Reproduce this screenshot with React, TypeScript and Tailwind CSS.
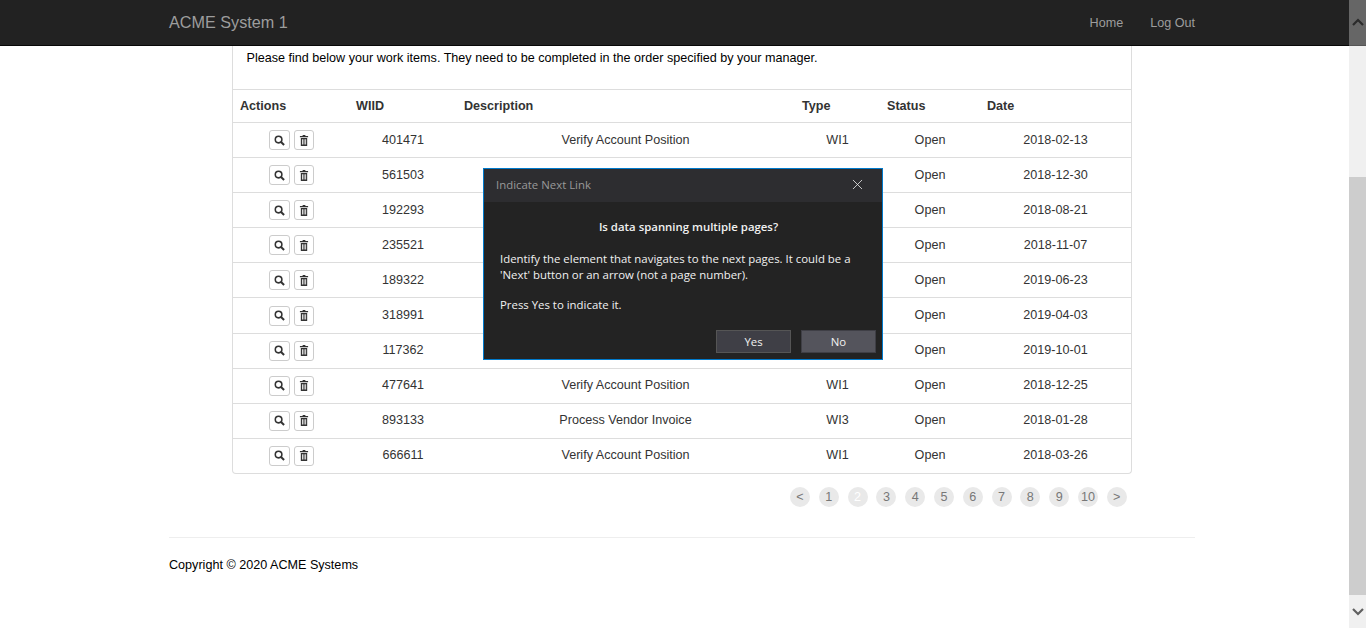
import React from 'react';
import { X } from 'lucide-react';

const rows = [
  ['401471', 'Verify Account Position', 'WI1', '2018-02-13'],
  ['561503', 'Process Vendor Invoice', 'WI3', '2018-12-30'],
  ['192293', 'Verify Account Position', 'WI1', '2018-08-21'],
  ['235521', 'Process Vendor Invoice', 'WI3', '2018-11-07'],
  ['189322', 'Verify Account Position', 'WI1', '2019-06-23'],
  ['318991', 'Process Vendor Invoice', 'WI3', '2019-04-03'],
  ['117362', 'Verify Account Position', 'WI1', '2019-10-01'],
  ['477641', 'Verify Account Position', 'WI1', '2018-12-25'],
  ['893133', 'Process Vendor Invoice', 'WI3', '2018-01-28'],
  ['666611', 'Verify Account Position', 'WI1', '2018-03-26'],
];

const pages = ['<', '1', '2', '3', '4', '5', '6', '7', '8', '9', '10', '>'];

const gridCols = 'grid grid-cols-[116px_108px_338px_85px_100px_151px]';

const SearchGlyph = () => (
  <svg width="11" height="11" viewBox="0 0 12 12" fill="none" stroke="#333" strokeWidth="1.7">
    <circle cx="5" cy="5" r="3.6" />
    <path d="M7.7 7.7L11 11" strokeWidth="2.2" />
  </svg>
);

const TrashGlyph = () => (
  <svg width="10" height="11" viewBox="0 0 11 12" fill="#333">
    <path d="M4 0h3v1h3v1.5H1V1h3z" />
    <path d="M2 3.2h7V12H2zM3.3 4.5v6h.9v-6zM5.1 4.5v6h.9v-6zM6.9 4.5v6h.9v-6z" fillRule="evenodd" />
  </svg>
);

const IconButton = ({ wide, children }: { wide?: boolean; children: React.ReactNode }) => (
  <button className={`${wide ? 'w-[21px]' : 'w-[20px]'} h-[20px] flex items-center justify-center bg-white border border-[#ccc] rounded-[3px]`}>
    {children}
  </button>
);

const App: React.FC = () => {
  return (
    <div className="relative h-[628px] w-[1366px] flex overflow-hidden bg-white text-[12.6px] text-[#333] font-['Liberation_Sans',Arial,sans-serif]">
      <div className="w-[1349px] flex flex-col">
        {/* Navbar */}
        <nav className="h-[46px] shrink-0 bg-[#222] border-b border-[#080808] pl-[169px] pr-[154px] flex items-center justify-between">
          <span className="text-[16.2px] text-[#9d9d9d]">ACME System 1</span>
          <div className="flex gap-[27px] pt-[1px] text-[#9d9d9d]">
            <span>Home</span>
            <span>Log Out</span>
          </div>
        </nav>

        {/* Card */}
        <div className="ml-[232px] w-[900px] h-[428px] shrink-0 border-x border-b border-[#ddd] rounded-b-[4px]">
          <p className="h-[43px] pl-[13.5px] pt-[2px] leading-[20px] text-black">
            Please find below your work items. They need to be completed in the order specified by your manager.
          </p>
          <div className={`${gridCols} h-[33px] -ml-px border-t border-[#ddd] font-bold items-center`}>
            <div className="pl-[8px]">Actions</div>
            <div className="pl-[8px]">WIID</div>
            <div className="pl-[8px]">Description</div>
            <div className="pl-[8px]">Type</div>
            <div className="pl-[8px]">Status</div>
            <div className="pl-[8px]">Date</div>
          </div>
          {rows.map((r) => (
            <div key={r[0]} className={`${gridCols} h-[35.1px] -ml-px border-t border-[#ddd] items-center text-center`}>
              <div className="flex justify-center gap-[4px] pl-[3px]">
                <IconButton wide>
                  <SearchGlyph />
                </IconButton>
                <IconButton>
                  <TrashGlyph />
                </IconButton>
              </div>
              <div className="pl-[2px]">{r[0]}</div>
              <div className="pl-[1px]">{r[1]}</div>
              <div className="pl-[2px]">{r[2]}</div>
              <div className="pl-[2px]">Open</div>
              <div className="pl-[2px]">{r[3]}</div>
            </div>
          ))}
        </div>

        {/* Pagination */}
        <div className="ml-[790px] mt-[13px] flex gap-[8.8px] shrink-0">
          {pages.map((p, i) => (
            <span
              key={p}
              className={`w-[20px] h-[20px] rounded-full bg-[#e9e9e9] flex items-center justify-center text-[12.6px] ${i === 2 ? 'text-white' : 'text-[#777]'}`}
            >
              {p}
            </span>
          ))}
        </div>

        {/* Footer */}
        <footer className="ml-[169px] mr-[154px] mt-[30px] pt-[18px] border-t border-[#eee] text-black">
          Copyright © 2020 ACME Systems
        </footer>
      </div>

      {/* Page scrollbar */}
      <div className="w-[17px] h-full bg-[#f0f0f0] flex flex-col">
        <div className="h-[46px] bg-[#666] border-b border-[#555] flex items-center justify-center">
          <svg width="12" height="8" viewBox="0 0 12 8" fill="none" stroke="#2b2b2b" strokeWidth="2.2" className="-mt-[2px]">
            <path d="M1 7l5-5 5 5" />
          </svg>
        </div>
        <div className="h-[131px]" />
        <div className="h-[418px] bg-[#cdcdcd]" />
        <div className="flex-1 flex items-center justify-center">
          <svg width="12" height="8" viewBox="0 0 12 8" fill="none" stroke="#606060" strokeWidth="2.2">
            <path d="M1 1l5 5 5-5" />
          </svg>
        </div>
      </div>

      {/* Modal dialog */}
      <div className="absolute left-[483px] top-[168px] w-[400px] h-[192px] border border-[#007acc] bg-[#232323] text-[11.4px] leading-[16px] text-[#f1f1f1] font-['Open_Sans','Noto_Sans',sans-serif] flex flex-col">
        <div className="h-[33px] shrink-0 bg-[#2d2d30] pl-[12px] pr-[16px] pb-[2px] flex items-center justify-between text-[#999]">
          <span>Indicate Next Link</span>
          <X size={17} strokeWidth={1.1} className="text-[#f1f1f1]" />
        </div>
        <div className="flex-1 px-[16px] pt-[17px]">
          <p className="text-center font-semibold pl-[11px]">Is data spanning multiple pages?</p>
          <p className="mt-[16px]">
            Identify the element that navigates to the next pages. It could be a 'Next' button or an arrow (not a page number).
          </p>
          <p className="mt-[14px]">Press Yes to indicate it.</p>
        </div>
        <div className="flex justify-end gap-[10px] pr-[6px] pb-[6px]">
          <button className="w-[75px] h-[23px] bg-[#3f3f46] border border-[#555] text-[#f1f1f1]">Yes</button>
          <button className="w-[75px] h-[23px] bg-[#54545c] border border-[#3f3f46] text-[#f1f1f1]">No</button>
        </div>
      </div>
    </div>
  );
};

export default App;
